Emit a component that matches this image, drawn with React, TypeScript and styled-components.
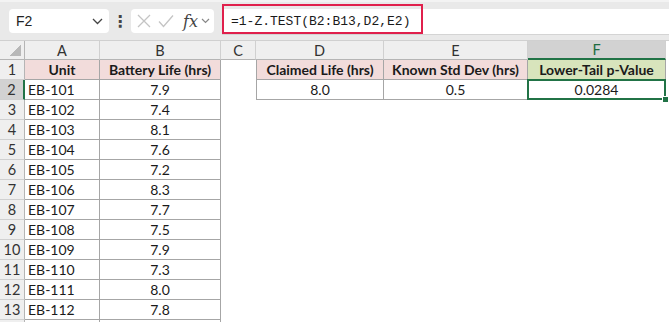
import * as React from 'react'
import styled, { createGlobalStyle } from 'styled-components'

const GlobalStyle = createGlobalStyle`
  html, body {
    margin: 0;
    padding: 0;
    background: #ffffff;
  }
  body {
    font-family: Lato, "Liberation Sans", sans-serif;
  }
`

type Row = { unit: string; life: string }

const rows: Row[] = [
    { unit: 'EB-101', life: '7.9' },
    { unit: 'EB-102', life: '7.4' },
    { unit: 'EB-103', life: '8.1' },
    { unit: 'EB-104', life: '7.6' },
    { unit: 'EB-105', life: '7.2' },
    { unit: 'EB-106', life: '8.3' },
    { unit: 'EB-107', life: '7.7' },
    { unit: 'EB-108', life: '7.5' },
    { unit: 'EB-109', life: '7.9' },
    { unit: 'EB-110', life: '7.3' },
    { unit: 'EB-111', life: '8.0' },
    { unit: 'EB-112', life: '7.8' },
]

const columns = ['A', 'B', 'C', 'D', 'E', 'F']

const Chevron = () => (
    <svg width="11" height="7" viewBox="0 0 11 7">
        <path d="M1 1 L5.5 5.5 L10 1" fill="none" stroke="#444" strokeWidth="1.3"/>
    </svg>
)

export default function App() {
    return (
        <>
            <GlobalStyle/>
            <Page>
                <FormulaBar>
                    <NameBox>
                        <span>F2</span>
                        <Chevron/>
                    </NameBox>
                    <Dots>⋮</Dots>
                    <FxBox>
                        <svg width="14" height="14" viewBox="0 0 14 14">
                            <path d="M1 1 L13 13 M13 1 L1 13" stroke="#c4c4c4" strokeWidth="1.3" fill="none"/>
                        </svg>
                        <svg width="16" height="14" viewBox="0 0 16 14">
                            <path d="M1 7.5 L5.5 12.5 L15 1.5" stroke="#c4c4c4" strokeWidth="1.3" fill="none"/>
                        </svg>
                        <FxLabel>fx</FxLabel>
                        <svg width="9" height="6" viewBox="0 0 9 6">
                            <path d="M1 1 L4.5 4.5 L8 1" fill="none" stroke="#888" strokeWidth="1.2"/>
                        </svg>
                    </FxBox>
                    <FormulaInput>
                        <FormulaText>=1-Z.TEST(B2:B13,D2,E2)</FormulaText>
                        <Highlight/>
                    </FormulaInput>
                </FormulaBar>
                <Sheet>
                    <Corner><CornerMark/></Corner>
                    {columns.map(c => (
                        <ColHeader key={c} $active={c === 'F'}>{c}</ColHeader>
                    ))}
                    <Filler/>

                    <RowHeader>1</RowHeader>
                    <Cell $fill="#f2dcdb" $border $bold>Unit</Cell>
                    <Cell $fill="#f2dcdb" $border $bold>Battery Life (hrs)</Cell>
                    <Cell/>
                    <Cell $fill="#f2dcdb" $border $left $bold>Claimed Life (hrs)</Cell>
                    <Cell $fill="#f2dcdb" $border $bold>Known Std Dev (hrs)</Cell>
                    <Cell $fill="#d8e4bc" $border $bold>Lower-Tail p-Value</Cell>
                    <Filler/>

                    {rows.map((r, i) => (
                        <React.Fragment key={r.unit}>
                            <RowHeader $active={i === 0}>{i + 2}</RowHeader>
                            <Cell $border $align="left">{r.unit}</Cell>
                            <Cell $border>{r.life}</Cell>
                            <Cell/>
                            {i === 0 ? (
                                <>
                                    <Cell $border $left>8.0</Cell>
                                    <Cell $border>0.5</Cell>
                                    <Cell $border $selected>0.0284<FillHandle/></Cell>
                                </>
                            ) : (
                                <>
                                    <Cell/>
                                    <Cell/>
                                    <Cell/>
                                </>
                            )}
                            <Filler/>
                        </React.Fragment>
                    ))}
                    <RowHeader/>
                    <Cell $border/>
                    <Cell $border/>
                </Sheet>
            </Page>
        </>
    )
}

const Page = styled.div`
  width: 669px;
  height: 322px;
  overflow: hidden;
  background: #ffffff;
`

const FormulaBar = styled.div`
  height: 41px;
  box-sizing: border-box;
  background: #e9e9e9;
  border-top: 2px solid #f3f3f3;
  padding-top: 7px;
  display: flex;
  align-items: flex-start;
  border-bottom: 1px solid #d0d0d0;
`

const NameBox = styled.div`
  margin-left: 9px;
  width: 100px;
  height: 24px;
  box-sizing: border-box;
  background: #ffffff;
  border-radius: 4px;
  display: flex;
  align-items: center;
  justify-content: space-between;
  padding: 0 6px 0 7px;
  font-family: "Liberation Sans", sans-serif;
  font-size: 14px;
  color: #222;
`

const Dots = styled.div`
  width: 22px;
  height: 24px;
  display: flex;
  align-items: center;
  justify-content: center;
  font-family: "DejaVu Sans", sans-serif;
  font-size: 16px;
  font-weight: bold;
  color: #444;
`

const FxBox = styled.div`
  width: 83px;
  height: 24px;
  box-sizing: border-box;
  background: #ffffff;
  border-radius: 4px;
  display: flex;
  align-items: center;
  gap: 7px;
  padding-left: 6px;
`

const FxLabel = styled.span`
  font-family: "DejaVu Serif", "Liberation Serif", serif;
  font-style: italic;
  font-size: 16px;
  color: #444;
  margin-left: 2px;
  margin-right: -4px;
`

const FormulaInput = styled.div`
  position: relative;
  flex: 1;
  margin-left: 8px;
  height: 25px;
  background: #ffffff;
  border-bottom: 1px solid #d4d4d4;
  display: flex;
  align-items: center;
`

const FormulaText = styled.span`
  padding-left: 9px;
  font-family: "Liberation Mono", monospace;
  font-size: 13px;
  color: #1a1a1a;
`

const Highlight = styled.div`
  position: absolute;
  left: 0;
  top: -5px;
  width: 201px;
  height: 30px;
  box-sizing: border-box;
  border: 2px solid #e0204c;
`

const Sheet = styled.div`
  display: grid;
  grid-template-columns: 25px 75px 121px 35px 128px 144px 138px 1fr;
  grid-template-rows: 19px;
  grid-auto-rows: 20px;
`

const Corner = styled.div`
  position: relative;
  background: #efefef;
  border-right: 1px solid #b5b5b5;
  border-bottom: 1px solid #b5b5b5;
`

const CornerMark = styled.div`
  position: absolute;
  right: 3px;
  bottom: 3px;
  width: 11px;
  height: 11px;
  background: linear-gradient(135deg, transparent 50%, #b8b8b8 50%);
`

const ColHeader = styled.div<{ $active?: boolean }>`
  box-sizing: border-box;
  background: ${p => (p.$active ? '#d2d2d2' : '#efefef')};
  border-right: 1px solid #d0d0d0;
  border-bottom: ${p => (p.$active ? '2px solid #217346' : '1px solid #b5b5b5')};
  display: flex;
  align-items: center;
  justify-content: center;
  font-size: 14.5px;
  color: ${p => (p.$active ? '#1d6b41' : '#333')};
`

const Filler = styled.div`
  background: #ffffff;
`

const RowHeader = styled.div<{ $active?: boolean }>`
  box-sizing: border-box;
  background: ${p => (p.$active ? '#d2d2d2' : '#efefef')};
  border-right: ${p => (p.$active ? '2px solid #217346' : '1px solid #b5b5b5')};
  border-bottom: 1px solid #d0d0d0;
  display: flex;
  align-items: center;
  justify-content: center;
  font-size: 14.5px;
  color: #333;
  grid-column: 1;
`

const Cell = styled.div<{
    $fill?: string
    $border?: boolean
    $left?: boolean
    $bold?: boolean
    $align?: 'left' | 'center'
    $selected?: boolean
}>`
  position: relative;
  box-sizing: border-box;
  background: ${p => p.$fill ?? '#ffffff'};
  border-right: ${p => (p.$border ? '1px solid #a6a6a6' : 'none')};
  border-bottom: ${p => (p.$border ? '1px solid #a6a6a6' : 'none')};
  border-left: ${p => (p.$left ? '1px solid #a6a6a6' : 'none')};
  display: flex;
  align-items: center;
  justify-content: ${p => (p.$align === 'left' ? 'flex-start' : 'center')};
  padding: 0 3px;
  font-size: 14px;
  font-weight: ${p => (p.$bold ? 700 : 400)};
  color: #1a1a1a;
  white-space: nowrap;
  ${p => p.$selected && `
    &::after {
      content: '';
      position: absolute;
      left: -1px;
      top: -1px;
      right: -1px;
      bottom: -1px;
      border: 2px solid #217346;
    }
  `}
`

const FillHandle = styled.span`
  position: absolute;
  right: -4px;
  bottom: -4px;
  width: 5px;
  height: 5px;
  background: #217346;
  border: 1px solid #ffffff;
  z-index: 2;
`
